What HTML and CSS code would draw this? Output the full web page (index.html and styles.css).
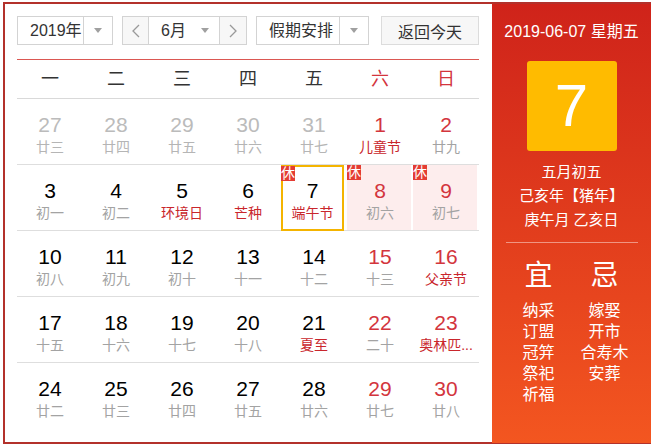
FILE: index.html
```html
<!DOCTYPE html>
<html lang="zh-CN">
<head>
<meta charset="utf-8">
<title>万年历</title>
<link rel="stylesheet" href="styles.css">
</head>
<body>
<div class="cal">
  <div class="main">
    <div class="toolbar">
      <div class="select year"><span class="sel-text">2019年</span><span class="sel-arrow"><i class="tri"></i></span></div>
      <div class="month-group">
        <span class="nav"><svg width="8" height="14" viewBox="0 0 8 14"><polyline points="7,1 1,7 7,13" fill="none" stroke="#999" stroke-width="1.3"/></svg></span>
        <span class="month"><span class="sel-text">6月</span><i class="tri"></i></span>
        <span class="nav next"><svg width="8" height="14" viewBox="0 0 8 14"><polyline points="1,1 7,7 1,13" fill="none" stroke="#999" stroke-width="1.3"/></svg></span>
      </div>
      <div class="select holiday"><span class="sel-text">假期安排</span><span class="sel-arrow"><i class="tri"></i></span></div>
      <div class="btn-today">返回今天</div>
    </div>
    <div class="grid">
      <div class="wk">一</div><div class="wk">二</div><div class="wk">三</div><div class="wk">四</div><div class="wk">五</div><div class="wk we">六</div><div class="wk we">日</div>

      <div class="cell other"><div class="day"><span class="num">27</span><span class="lunar">廿三</span></div></div>
      <div class="cell other"><div class="day"><span class="num">28</span><span class="lunar">廿四</span></div></div>
      <div class="cell other"><div class="day"><span class="num">29</span><span class="lunar">廿五</span></div></div>
      <div class="cell other"><div class="day"><span class="num">30</span><span class="lunar">廿六</span></div></div>
      <div class="cell other"><div class="day"><span class="num">31</span><span class="lunar">廿七</span></div></div>
      <div class="cell weekend"><div class="day"><span class="num">1</span><span class="lunar fest">儿童节</span></div></div>
      <div class="cell weekend"><div class="day"><span class="num">2</span><span class="lunar">廿九</span></div></div>

      <div class="cell"><div class="day"><span class="num">3</span><span class="lunar">初一</span></div></div>
      <div class="cell"><div class="day"><span class="num">4</span><span class="lunar">初二</span></div></div>
      <div class="cell"><div class="day"><span class="num">5</span><span class="lunar fest">环境日</span></div></div>
      <div class="cell"><div class="day"><span class="num">6</span><span class="lunar fest">芒种</span></div></div>
      <div class="cell"><div class="day today"><span class="rest">休</span><span class="num">7</span><span class="lunar fest">端午节</span></div></div>
      <div class="cell weekend"><div class="day off"><span class="rest">休</span><span class="num">8</span><span class="lunar">初六</span></div></div>
      <div class="cell weekend"><div class="day off"><span class="rest">休</span><span class="num">9</span><span class="lunar">初七</span></div></div>

      <div class="cell"><div class="day"><span class="num">10</span><span class="lunar">初八</span></div></div>
      <div class="cell"><div class="day"><span class="num">11</span><span class="lunar">初九</span></div></div>
      <div class="cell"><div class="day"><span class="num">12</span><span class="lunar">初十</span></div></div>
      <div class="cell"><div class="day"><span class="num">13</span><span class="lunar">十一</span></div></div>
      <div class="cell"><div class="day"><span class="num">14</span><span class="lunar">十二</span></div></div>
      <div class="cell weekend"><div class="day"><span class="num">15</span><span class="lunar">十三</span></div></div>
      <div class="cell weekend"><div class="day"><span class="num">16</span><span class="lunar fest">父亲节</span></div></div>

      <div class="cell"><div class="day"><span class="num">17</span><span class="lunar">十五</span></div></div>
      <div class="cell"><div class="day"><span class="num">18</span><span class="lunar">十六</span></div></div>
      <div class="cell"><div class="day"><span class="num">19</span><span class="lunar">十七</span></div></div>
      <div class="cell"><div class="day"><span class="num">20</span><span class="lunar">十八</span></div></div>
      <div class="cell"><div class="day"><span class="num">21</span><span class="lunar fest">夏至</span></div></div>
      <div class="cell weekend"><div class="day"><span class="num">22</span><span class="lunar">二十</span></div></div>
      <div class="cell weekend"><div class="day"><span class="num">23</span><span class="lunar fest">奥林匹...</span></div></div>

      <div class="cell last"><div class="day"><span class="num">24</span><span class="lunar">廿二</span></div></div>
      <div class="cell last"><div class="day"><span class="num">25</span><span class="lunar">廿三</span></div></div>
      <div class="cell last"><div class="day"><span class="num">26</span><span class="lunar">廿四</span></div></div>
      <div class="cell last"><div class="day"><span class="num">27</span><span class="lunar">廿五</span></div></div>
      <div class="cell last"><div class="day"><span class="num">28</span><span class="lunar">廿六</span></div></div>
      <div class="cell last weekend"><div class="day"><span class="num">29</span><span class="lunar">廿七</span></div></div>
      <div class="cell last weekend"><div class="day"><span class="num">30</span><span class="lunar">廿八</span></div></div>
    </div>
  </div>
  <div class="side">
    <div class="side-date">2019-06-07 星期五</div>
    <div class="big-day">7</div>
    <div class="side-lunar">
      <div>五月初五</div>
      <div>己亥年【猪年】</div>
      <div>庚午月 乙亥日</div>
    </div>
    <div class="side-line"></div>
    <div class="yiji">
      <div class="col">
        <div class="yj-title">宜</div>
        <div class="yj-item">纳采</div>
        <div class="yj-item">订盟</div>
        <div class="yj-item">冠笄</div>
        <div class="yj-item">祭祀</div>
        <div class="yj-item">祈福</div>
      </div>
      <div class="col">
        <div class="yj-title">忌</div>
        <div class="yj-item">嫁娶</div>
        <div class="yj-item">开市</div>
        <div class="yj-item">合寿木</div>
        <div class="yj-item">安葬</div>
      </div>
    </div>
  </div>
</div>
</body>
</html>
```

FILE: styles.css
```css
* { box-sizing: border-box; }
html, body { margin: 0; padding: 0; background: #fff; }
body {
  font-family: "Liberation Sans", "Noto Sans CJK SC", sans-serif;
  color: #333;
}
.cal {
  margin: 2px 0 0 3px;
  width: 648px;
  height: 442px;
  border: 2px solid #b3312b;
  border-right: none;
  display: flex;
}
.main {
  width: 487px;
  padding: 12px 13px 0 12px;
}
.toolbar {
  display: flex;
  height: 29px;
  margin-bottom: 14px;
}
.select, .month-group, .btn-today {
  border: 1px solid #d3d3d3;
  height: 29px;
  display: flex;
  align-items: center;
  font-size: 16px;
  color: #333;
  background: #fff;
}
.year { width: 96px; }
.holiday { width: 113px; margin-left: 9px; }
.sel-text { flex: 1; padding-left: 12px; line-height: 27px; }
.sel-arrow {
  width: 29px;
  height: 27px;
  border-left: 1px solid #d3d3d3;
  display: flex;
  align-items: center;
  justify-content: center;
}
.tri {
  display: block;
  width: 0; height: 0;
  border-left: 4px solid transparent;
  border-right: 4px solid transparent;
  border-top: 5px solid #a0a0a0;
}
.month-group { width: 125px; margin-left: 9px; }
.nav {
  width: 26px;
  height: 27px;
  background: #f7f7f7;
  display: flex;
  align-items: center;
  justify-content: center;
  border-right: 1px solid #d3d3d3;
}
.nav.next { border-right: none; border-left: 1px solid #d3d3d3; width: 27px; }
.month {
  flex: 1;
  display: flex;
  align-items: center;
  padding-right: 10px;
}
.btn-today {
  margin-left: 12px;
  width: 98px;
  justify-content: center;
  background: #f7f7f7;
  border-color: #dcdcdc;
}
.grid {
  width: 462px;
  border-top: 1px solid #db5752;
  display: grid;
  grid-template-columns: repeat(7, 66px);
}
.wk {
  height: 39px;
  line-height: 38px;
  border-bottom: 1px solid #d9d9d9;
  text-align: center;
  font-size: 18px;
  color: #333;
}
.wk.we { color: #d3353d; }
.cell {
  height: 66px;
  border-bottom: 1px solid #dedede;
}
.cell.last { border-bottom: none; height: 65px; }
.day {
  position: relative;
  height: 65px;
  margin-right: 2px;
  display: flex;
  flex-direction: column;
  align-items: center;
  padding-top: 14px;
  padding-left: 2px;
}
.num {
  font-size: 21px;
  line-height: 24px;
  color: #000;
}
.lunar {
  font-size: 14px;
  line-height: 20px;
  color: #a3a3a3;
  white-space: nowrap;
}
.lunar.fest { color: #c9262c; }
.cell.weekend .num { color: #d3353d; }
.cell.other .num { color: #bbb; }
.cell.other .lunar { color: #b5b5b5; }
.day.off { background: #fdeded; }
.day.today {
  border: 2px solid #f4b400;
  height: 66px;
  margin-right: 3px;
  padding-top: 12px;
  padding-left: 0;
}
.rest {
  position: absolute;
  top: 0;
  left: 0;
  width: 14px;
  height: 15px;
  background: #e43c33;
  color: #fff;
  font-size: 14px;
  line-height: 15px;
  text-align: center;
  overflow: hidden;
}
.day.today .rest { top: -1px; left: -2px; }
.side {
  width: 159px;
  height: 439px;
  background: linear-gradient(#cf231a, #f35620);
  color: #fff;
  display: flex;
  flex-direction: column;
  align-items: center;
  padding-top: 16px;
}
.side-date {
  font-size: 16px;
  line-height: 24px;
}
.big-day {
  margin-top: 17px;
  width: 90px;
  height: 90px;
  background: #ffbb00;
  border-radius: 3px;
  font-size: 60px;
  line-height: 90px;
  text-align: center;
  color: #fff;
}
.side-lunar {
  margin-top: 9px;
  font-size: 15px;
  line-height: 24px;
  text-align: center;
}
.side-line {
  margin-top: 10px;
  width: 132px;
  height: 1px;
  background: rgba(255, 255, 255, 0.45);
}
.yiji {
  margin-top: 16px;
  display: flex;
  width: 132px;
}
.col {
  width: 66px;
  display: flex;
  flex-direction: column;
  align-items: center;
}
.yj-title {
  font-size: 28px;
  line-height: 34px;
  margin-bottom: 7px;
}
.yj-item {
  font-size: 16px;
  line-height: 21px;
}
```
